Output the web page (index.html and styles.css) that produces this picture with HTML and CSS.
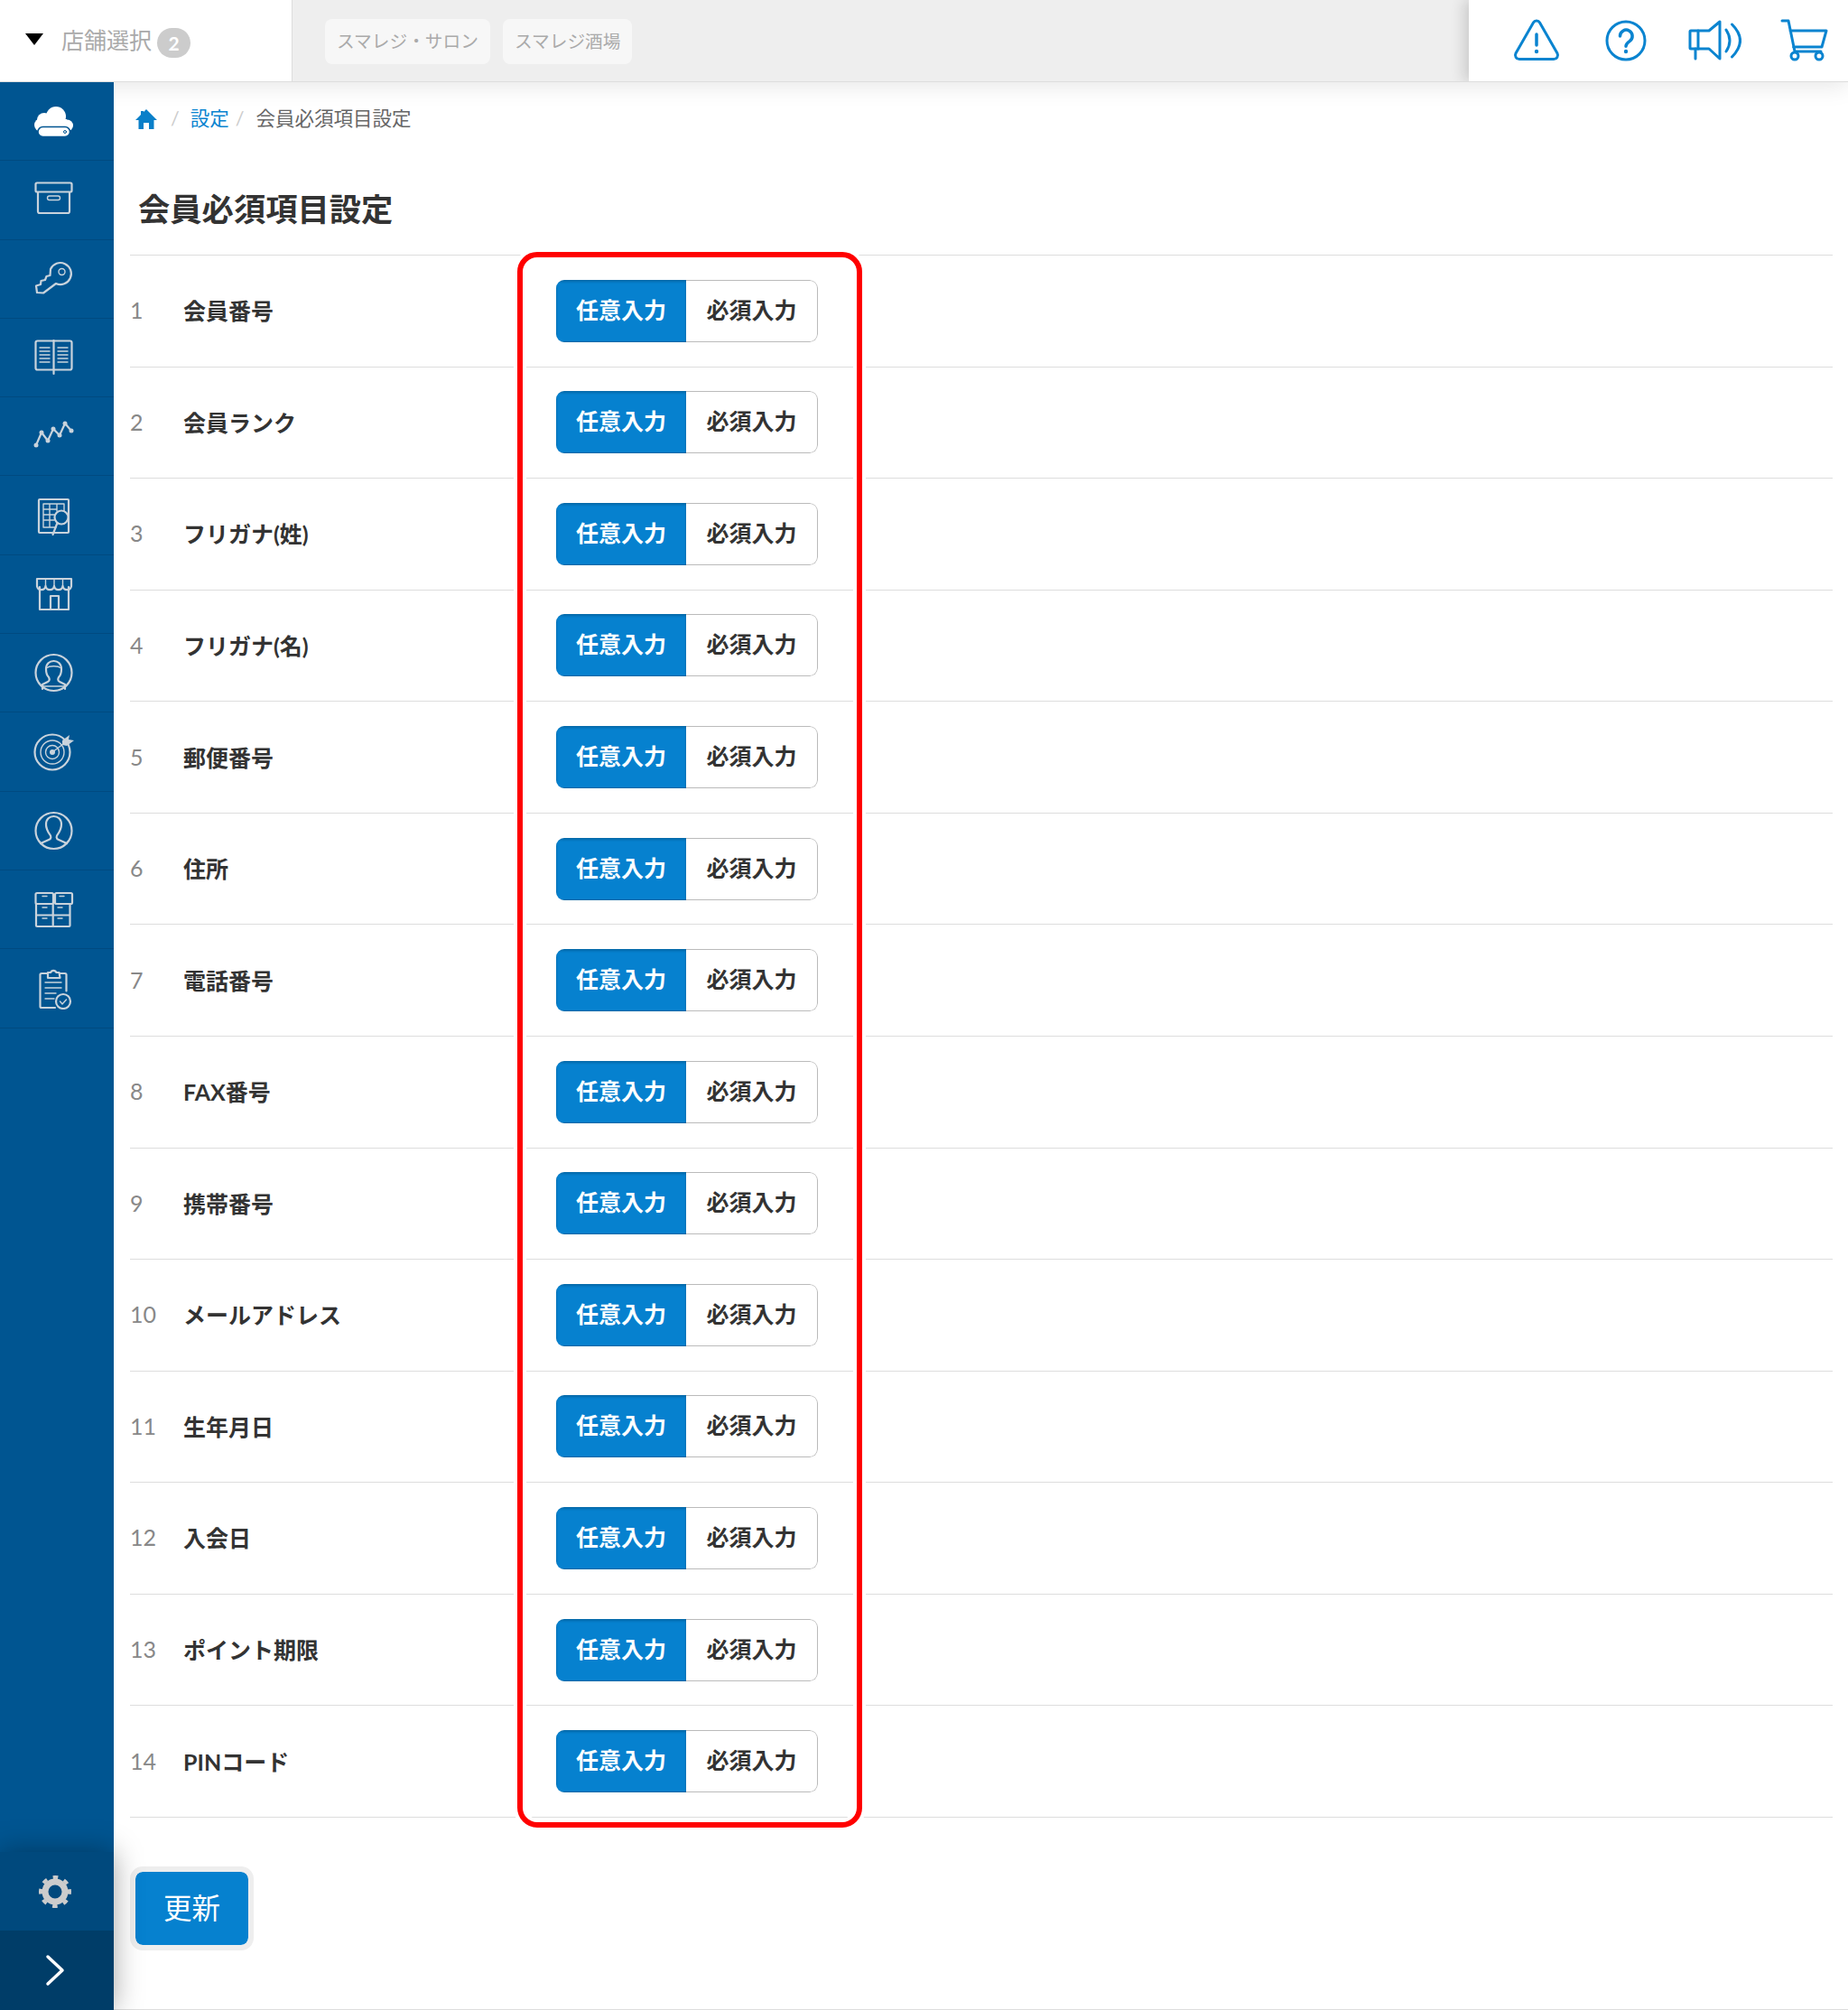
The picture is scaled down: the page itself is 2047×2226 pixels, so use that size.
FILE: index.html
```html
<!DOCTYPE html>
<html lang="ja">
<head>
<meta charset="utf-8">
<title>会員必須項目設定</title>
<link rel="stylesheet" href="styles.css">
</head>
<body>
<header class="topbar">
  <div class="store-select">
    <span class="caret"></span>
    <span class="store-label">店舗選択</span>
    <span class="store-badge">2</span>
  </div>
  <div class="tabs">
    <span class="tab">スマレジ・サロン</span>
    <span class="tab">スマレジ酒場</span>
  </div>
  <div class="top-actions">
    <svg class="top-icon" viewBox="0 0 60 60"><path d="M26.5 10a4 4 0 0 1 7 0L53 44a4.5 4.5 0 0 1-4 6.6H11A4.5 4.5 0 0 1 7 44Z"/><path class="thick" d="M30 23v12"/><circle class="dot" cx="30" cy="42" r="2.2"/></svg>
    <svg class="top-icon" viewBox="0 0 60 60"><circle cx="30" cy="30" r="21"/><path class="thick" d="M23.5 25a6.8 6.8 0 1 1 10.6 5.6c-2.8 1.9-4.1 2.9-4.1 5.6"/><circle class="dot" cx="30" cy="42" r="2.2"/></svg>
    <svg class="top-icon" viewBox="0 0 60 60"><path d="M24 19 36 9v41L24 39H4a1 1 0 0 1-1-1V20a1 1 0 0 1 1-1Z"/><path d="M12 19v20M9 39v11M43 18q8 12 0 24M49.500 12q18 18 0 36"/></svg>
    <svg class="top-icon" viewBox="0 0 60 60"><path d="M6 8h7l7 34h29M15 19h40l-5 18H18.500"/><circle cx="20" cy="47" r="4"/><circle cx="47" cy="47" r="4"/></svg>
  </div>
</header>

<div class="layout">
  <aside class="sidebar">
    <nav class="side-nav">
      <a class="side-item"><svg class="side-icon" viewBox="35 110 48 48"><g class="solid"><circle cx="62" cy="129" r="11"/><circle cx="49" cy="133" r="8"/><circle cx="45.500" cy="138.500" r="7.500"/><circle cx="74.500" cy="139" r="6.500"/><rect x="46" y="132" width="28" height="12"/></g><rect class="pill" x="42" y="140.500" width="35.500" height="11" rx="5.500"/><circle class="hole" cx="72" cy="146" r="1.500"/></svg></a>
      <a class="side-item"><svg class="side-icon" viewBox="35 197 48 48"><rect x="39.500" y="202.500" width="40" height="10" rx="1.500"/><path d="M42 213v21a2 2 0 0 0 2 2h31a2 2 0 0 0 2-2v-21"/><rect class="fine" x="52.500" y="217" width="14" height="4.500" rx="2.200"/></svg></a>
      <a class="side-item"><svg class="side-icon" viewBox="35 285 48 48"><path d="M56 298A12 12 0 1 1 62 314L48 324.500 41 324 40 316.500 45 315 45.500 311 50 310 51.500 306 55.500 305Z"/><circle class="fine" cx="68.500" cy="301" r="3.500"/></svg></a>
      <a class="side-item"><svg class="side-icon" viewBox="35 372 48 48"><rect x="39.500" y="377.500" width="40" height="32" rx="2"/><path d="M59.500 377v37"/><path class="fine" d="M44 385h11M44 389h11M44 393h11M44 397h11M44 401h11M64 385h11M64 389h11M64 393h11M64 397h11M64 401h11"/></svg></a>
      <a class="side-item"><svg class="side-icon" viewBox="35 459 48 48"><path d="M40 493l6-14 7 9 6-13 7 7 6-13 7 8"/><g class="dots"><circle cx="40" cy="493" r="2.500"/><circle cx="46" cy="479" r="2.500"/><circle cx="53" cy="488" r="2.500"/><circle cx="59" cy="475" r="2.500"/><circle cx="66" cy="482" r="2.500"/><circle cx="72" cy="469" r="2.500"/><circle cx="79" cy="477" r="2.500"/></g></svg></a>
      <a class="side-item"><svg class="side-icon" viewBox="35 547 48 48"><rect x="43" y="553" width="33" height="37" rx="1"/><path class="fine" d="M48 558h23v12M48 558v26h14M48 564h14M48 570h12M48 576h12M55 558v26M63 558v8"/><circle class="lens" cx="68" cy="573" r="7.500"/><path d="M63.500 579l-5 13"/></svg></a>
      <a class="side-item"><svg class="side-icon" viewBox="35 634 48 48"><path d="M41 641h38v8a4.800 4.800 0 0 1-9.500 0 4.800 4.800 0 0 1-9.500 0 4.800 4.800 0 0 1-9.500 0 4.800 4.800 0 0 1-9.500 0Z"/><path d="M44 650v25h32v-25M56 675v-15h9v15"/><path class="fine" d="M50.500 641v8M60 641v8M69.500 641v8"/></svg></a>
      <a class="side-item"><svg class="side-icon" viewBox="35 722 48 48"><circle cx="59.500" cy="746" r="20"/><path d="M47 764v-5l6-3c2-1 2-3 1-5-2-2-3-5-3-9 0-6 4-9 8.500-9s8.500 3 8.500 9c0 4-1 7-3 9-1 2-1 4 1 5l6 3v5"/><path class="fine" d="M51 741c4-3 13-3 17 0M47 761h25"/></svg></a>
      <a class="side-item"><svg class="side-icon" viewBox="35 809 48 48"><circle cx="58" cy="833" r="19.500"/><circle class="fine" cx="58" cy="833" r="13"/><circle class="fine" cx="58" cy="833" r="7.500"/><circle class="solid-grey" cx="58" cy="833" r="3"/><path class="fine" d="M58 833 74 821"/><path class="solid-grey" d="M69 820l8-6-1 5 6 1-8 6-5-1Z"/></svg></a>
      <a class="side-item"><svg class="side-icon" viewBox="35 896 48 48"><circle cx="59.500" cy="920" r="20"/><path d="M45 934l9-4c3-1 3-4 1-6-2-3-4-6-4-11 0-6 4-9 8.500-9s8.500 3 8.500 9c0 5-2 8-4 11-2 2-2 5 1 6l9 4"/></svg></a>
      <a class="side-item"><svg class="side-icon" viewBox="35 984 48 48"><rect x="39.500" y="990" width="19.500" height="12" rx="1.500"/><rect x="61" y="990" width="19" height="12" rx="1.500"/><path d="M40 1002v12.500h37.500V1002M40 1014.500V1026a1 1 0 0 0 1 1h35.500a1 1 0 0 0 1-1v-11.500M58.700 1002v25"/><path class="fine" d="M47 993.500h5M66 993.500h5M47 1006h5M64 1006h5M47 1018h5M64 1018h5"/></svg></a>
      <a class="side-item"><svg class="side-icon" viewBox="35 1071 48 48"><path d="M52 1079h-6a1.500 1.500 0 0 0-1.500 1.500v35a1.500 1.500 0 0 0 1.500 1.500h15M66 1079h6a1.500 1.500 0 0 1 1.500 1.500v18"/><path d="M53 1084v-6h3a3.500 3.500 0 0 1 6.500 0h3l1 6Z"/><path class="fine" d="M50 1089h18M50 1095h18M50 1101h12M50 1107h10"/><circle class="lens" cx="70" cy="1110" r="8"/><path class="fine" d="M66.500 1110l2.500 3 4.500-5"/></svg></a>
    </nav>
    <div class="side-footer">
      <a class="side-settings"><svg class="gear" viewBox="0 0 40 40"><circle cx="20" cy="20" r="11" class="gear-body"/><circle cx="20" cy="20" r="16" class="gear-teeth" transform="rotate(-9.900 20 20)"/></svg></a>
      <a class="side-expand"><svg class="chevron" viewBox="0 0 24 36"><path d="M3 3l16 15L3 33"/></svg></a>
    </div>
  </aside>

  <main class="content">
    <nav class="breadcrumb">
      <svg class="home" viewBox="0 0 26 24"><path d="M13 1 25 13h-3.500v10H16v-7h-6v7H4.500V13H1L7 7V3h3v1Z"/></svg>
      <span class="sep">/</span>
      <a class="crumb-link">設定</a>
      <span class="sep">/</span>
      <span class="crumb">会員必須項目設定</span>
    </nav>
    <h1 class="page-title">会員必須項目設定</h1>
    <div class="rows">
      <div class="row"><span class="num">1</span><span class="label">会員番号</span><div class="toggle"><span class="opt on">任意入力</span><span class="opt">必須入力</span></div></div>
      <div class="row"><span class="num">2</span><span class="label">会員ランク</span><div class="toggle"><span class="opt on">任意入力</span><span class="opt">必須入力</span></div></div>
      <div class="row"><span class="num">3</span><span class="label">フリガナ(姓)</span><div class="toggle"><span class="opt on">任意入力</span><span class="opt">必須入力</span></div></div>
      <div class="row"><span class="num">4</span><span class="label">フリガナ(名)</span><div class="toggle"><span class="opt on">任意入力</span><span class="opt">必須入力</span></div></div>
      <div class="row"><span class="num">5</span><span class="label">郵便番号</span><div class="toggle"><span class="opt on">任意入力</span><span class="opt">必須入力</span></div></div>
      <div class="row"><span class="num">6</span><span class="label">住所</span><div class="toggle"><span class="opt on">任意入力</span><span class="opt">必須入力</span></div></div>
      <div class="row"><span class="num">7</span><span class="label">電話番号</span><div class="toggle"><span class="opt on">任意入力</span><span class="opt">必須入力</span></div></div>
      <div class="row"><span class="num">8</span><span class="label">FAX番号</span><div class="toggle"><span class="opt on">任意入力</span><span class="opt">必須入力</span></div></div>
      <div class="row"><span class="num">9</span><span class="label">携帯番号</span><div class="toggle"><span class="opt on">任意入力</span><span class="opt">必須入力</span></div></div>
      <div class="row"><span class="num">10</span><span class="label">メールアドレス</span><div class="toggle"><span class="opt on">任意入力</span><span class="opt">必須入力</span></div></div>
      <div class="row"><span class="num">11</span><span class="label">生年月日</span><div class="toggle"><span class="opt on">任意入力</span><span class="opt">必須入力</span></div></div>
      <div class="row"><span class="num">12</span><span class="label">入会日</span><div class="toggle"><span class="opt on">任意入力</span><span class="opt">必須入力</span></div></div>
      <div class="row"><span class="num">13</span><span class="label">ポイント期限</span><div class="toggle"><span class="opt on">任意入力</span><span class="opt">必須入力</span></div></div>
      <div class="row"><span class="num">14</span><span class="label">PINコード</span><div class="toggle"><span class="opt on">任意入力</span><span class="opt">必須入力</span></div></div>
      <div class="highlight"></div>
    </div>
    <button class="update" type="button">更新</button>
  </main>
</div>
</body>
</html>
```

FILE: styles.css
```css
* { box-sizing: border-box; }
html, body { margin: 0; padding: 0; }
body {
  width: 2047px;
  height: 2226px;
  overflow: hidden;
  background: #fff;
  color: #333;
  font-family: Lato, "Noto Sans CJK JP", sans-serif;
  display: flex;
  flex-direction: column;
}

/* top bar */
.topbar {
  position: relative;
  z-index: 1;
  flex: none;
  height: 91px;
  display: flex;
  background: #eee;
  border-bottom: 1px solid #ddd;
  box-shadow: 0 4px 24px rgba(0, 0, 0, .1);
}
.store-select {
  width: 324px;
  display: flex;
  align-items: center;
  padding: 0 0 0 28px;
  background: #fff;
  border-right: 1px solid #ddd;
}
.caret {
  width: 0;
  height: 0;
  margin-bottom: 4px;
  border-left: 10px solid transparent;
  border-right: 10px solid transparent;
  border-top: 13px solid #000;
}
.store-label {
  margin-left: 20px;
  font-size: 25px;
  color: #aaa;
  line-height: 1;
  margin-top: -2px;
}
.store-badge {
  margin-left: 6px;
  width: 37px;
  height: 33px;
  border-radius: 17px;
  margin-top: 5px;
  background: #ccc;
  color: #fff;
  font-size: 21px;
  font-weight: 700;
  line-height: 33px;
  text-align: center;
}
.tabs {
  flex: 1;
  display: flex;
  gap: 14px;
  padding: 21px 0 0 36px;
}
.tab {
  height: 50px;
  padding: 0 13px;
  border-radius: 8px;
  background: #f7f7f7;
  color: #aaa;
  font-size: 19.700px;
  line-height: 50px;
  white-space: nowrap;
}
.top-actions {
  width: 420px;
  display: flex;
  align-items: center;
  gap: 38.500px;
  padding-left: 45px;
  background: #fff;
  box-shadow: -6px 0 14px rgba(0, 0, 0, .14);
  clip-path: inset(0 0 0 -30px);
}
.top-icon {
  flex: none;
  width: 60px;
  height: 60px;
  fill: none;
  stroke: #0a84d0;
  stroke-width: 3;
  stroke-linecap: round;
  stroke-linejoin: round;
}
.top-icon .thick { stroke-width: 3.500; }
.top-icon .dot { fill: #0a84d0; stroke: none; }

/* layout */
.layout {
  flex: 1;
  min-height: 0;
  display: flex;
}

/* sidebar */
.sidebar {
  position: relative;
  z-index: 2;
  flex: none;
  width: 126px;
  display: flex;
  flex-direction: column;
  background: #005591;
}
.side-nav { flex: 1; }
.side-item {
  display: flex;
  align-items: center;
  justify-content: center;
  height: 87.300px;
  padding-right: 8px;
  border-bottom: 1px solid #004a80;
}
.side-icon {
  width: 48px;
  height: 48px;
  fill: none;
  stroke: #c9d3dc;
  stroke-width: 2.200;
  stroke-linecap: round;
  stroke-linejoin: round;
}
.side-icon .fine { stroke-width: 1.400; }
.side-icon .solid { fill: #fff; stroke: none; }
.side-icon .pill { fill: #fff; stroke: #005591; stroke-width: 1.500; }
.side-icon .hole { fill: none; stroke: #005591; stroke-width: 1; }
.side-icon .dots { fill: #c9d3dc; stroke: none; }
.side-icon .solid-grey { fill: #c9d3dc; stroke: none; }
.side-icon .lens { fill: #005591; }
.side-footer {
  flex: none;
  box-shadow: 0 0 30px rgba(0, 0, 0, .35);
}
.side-settings {
  display: flex;
  align-items: center;
  justify-content: center;
  height: 87px;
  padding-right: 4px;
  background: #00497d;
}
.gear { width: 40px; height: 40px; fill: none; }
.gear-body { stroke: #ccc; stroke-width: 7; }
.gear-teeth { stroke: #ccc; stroke-width: 4; stroke-dasharray: 5.500 7.066; }
.side-expand {
  display: flex;
  align-items: center;
  justify-content: center;
  height: 88px;
  padding-right: 3px;
  background: #003d68;
}
.chevron {
  width: 24px;
  height: 36px;
  fill: none;
  stroke: #fff;
  stroke-width: 3.500;
  stroke-linecap: round;
  stroke-linejoin: round;
}

/* content */
.content {
  flex: 1;
  min-width: 0;
  padding: 0 17px 0 18px;
  border-bottom: 1px solid #ddd;
}
.breadcrumb {
  display: flex;
  align-items: center;
  height: 26px;
  margin: 28px 0 0 5px;
  font-size: 21.500px;
  line-height: 1;
}
.home { width: 26px; height: 24px; fill: #0a7fc9; }
.sep { margin: 0 12px 0 14px; color: #ccc; }
.crumb-link + .sep { margin: 0 13px 0 7px; }
.crumb-link { color: #0a84d0; }
.crumb { color: #666; }
.page-title {
  margin: 62px 0 0 9px;
  height: 75px;
  font-size: 35.300px;
  font-weight: 700;
  line-height: 50px;
  color: #333;
}
.rows {
  position: relative;
  border-top: 1px solid #ddd;
}
.row {
  display: grid;
  grid-template-columns: 59px 413px auto;
  align-items: center;
  justify-content: start;
  height: 123.570px;
  border-bottom: 1px solid #ddd;
}
.num { font-size: 25px; color: #888; padding-bottom: 2px; }
.label { font-size: 25px; font-weight: 700; color: #333; white-space: nowrap; padding-bottom: 2px; }
.toggle {
  display: flex;
  width: 290px;
  height: 69px;
  border-radius: 9px;
  overflow: hidden;
  font-size: 25px;
  font-weight: 700;
  line-height: 65px;
  text-align: center;
}
.opt {
  flex: 1;
  background: #fff;
  color: #333;
  border: 1px solid #bbb;
  border-left: 0;
  border-radius: 0 9px 9px 0;
}
.opt.on {
  flex: none;
  width: 144px;
  border: 0;
  border-radius: 0;
  background: #0681cf;
  color: #fff;
  line-height: 66px;
  box-shadow: inset 0 2px 3px rgba(0, 0, 0, .2), inset 0 -1px 1px rgba(0, 0, 0, .2);
}
.highlight {
  position: absolute;
  left: 429px;
  top: -4px;
  width: 382px;
  height: 1745px;
  border: 6px solid #f00;
  border-radius: 22px;
  box-shadow: 0 0 0 4px #fff, inset 0 0 0 4px #fff;
  pointer-events: none;
}
.update {
  display: block;
  width: 137px;
  height: 93px;
  margin: 54px 0 0;
  padding: 0;
  border: 6px solid #eee;
  border-radius: 14px;
  background: #0681cf;
  background-clip: padding-box;
  color: #fff;
  font-family: inherit;
  font-size: 31.500px;
  line-height: 1;
}
```
